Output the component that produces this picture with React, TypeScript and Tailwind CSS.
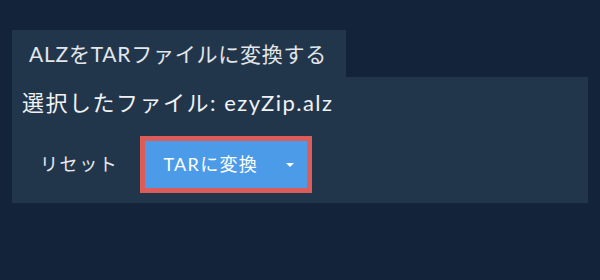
export default function App() {
  return (
    <div
      className="w-[600px] h-[280px] bg-[#12233a] pt-[30px] px-3"
      style={{ fontFamily: 'Lato, "Noto Sans CJK JP", sans-serif' }}
    >
      <div className="inline-flex h-[47px] items-center bg-[#22364b] pl-[17px] pr-[19px] text-[21px] tracking-[0.75px] text-[#e3e6ea]">
        ALZをTARファイルに変換する
      </div>
      <div className="bg-[#22364b] h-[126px] px-[10px] pt-3">
        <div className="text-[22px] tracking-[1.5px] text-[#f0f2f4] leading-7">選択したファイル: ezyZip.alz</div>
        <div className="flex items-center mt-[19px]">
          <button className="px-[18px] h-[57px] text-[18px] tracking-[1.6px] text-[#e6e9ec]">リセット</button>
          <div className="ml-1 border-[5px] border-[#dc5c5a] bg-[#4c9be8] h-[57px] w-[172px] flex items-center justify-between text-white text-[18px] tracking-[1.3px]">
            <span className="pl-[18px]">TARに変換</span>
            <span className="pr-[13px]">
              <svg width="8" height="4" viewBox="0 0 8 4" className="block"><path d="M0 0h8L4 4z" fill="#fff" /></svg>
            </span>
          </div>
        </div>
      </div>
    </div>
  )
}
